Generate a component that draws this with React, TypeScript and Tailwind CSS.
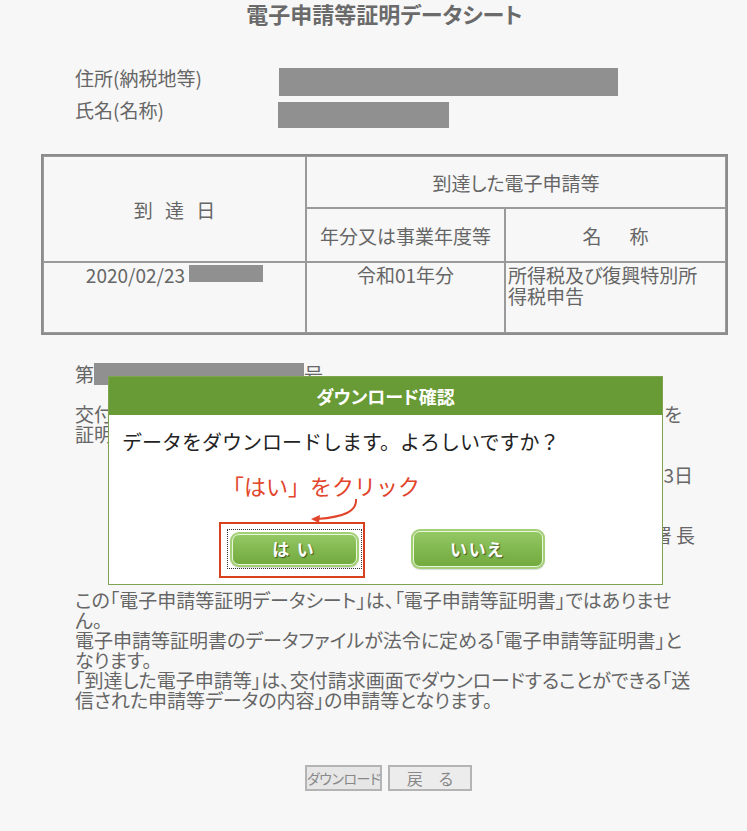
import React from "react";

const jp = "font-['Noto_Sans_CJK_JP','Noto_Sans',sans-serif] [font-feature-settings:'palt']";

const GreenButton = ({ label, w, h }: { label: string; w: string; h: string }) => (
  <div className={`${w} ${h} rounded-[9px] bg-[#a3d077] p-[2px] shadow-[0_1px_1px_rgba(0,0,0,0.15)]`}>
    <div className="flex h-full w-full items-center justify-center rounded-[7px] border border-[#e9f6dc] bg-gradient-to-b from-[#94c865] via-[#82b84f] to-[#74ab40] text-[17px] font-bold tracking-[2px] text-white [text-shadow:1px_1px_1px_rgba(40,60,20,0.8)]">
      {label}
    </div>
  </div>
);

const ConfirmDialog = () => (
  <div className="absolute left-[108px] top-[376px] w-[555px] border border-[#7ea452] bg-white">
    <div className="flex h-[38px] items-center justify-center bg-[#689a35] text-[18px] font-bold text-white">
      ダウンロード確認
    </div>
    <div className="px-[13px] pt-[16px] pb-[15px]">
      <p className="text-[20px] leading-[22px] text-[#222] [font-feature-settings:normal]">
        データをダウンロードします。よろしいですか？
      </p>
      <div className="mt-[76px] flex justify-center gap-[49px]">
        <div className="flex h-[40px] w-[135px] items-center justify-center border border-dotted border-[#333] p-[2px]">
          <GreenButton label="は い" w="w-[129px]" h="h-[35px]" />
        </div>
        <GreenButton label="いいえ" w="w-[134px]" h="h-[40px]" />
      </div>
    </div>

    {/* annotation drawn over the screenshot */}
    <div className="absolute left-[113px] top-[96px] text-[22px] leading-[24px] text-[#e2452b] [font-feature-settings:normal]">
      「はい」をクリック
    </div>
    <svg className="absolute left-[190px] top-[118px]" width="70" height="32" viewBox="0 0 70 32">
      <path d="M57 4 C58 16 46 22 18 24" fill="none" stroke="#e2452b" strokeWidth="2" />
      <path d="M12 24 L21 20 L20 28 Z" fill="#e2452b" />
    </svg>
    <div className="absolute left-[110px] top-[145px] h-[56px] w-[146px] border-2 border-[#d9401e]" />
  </div>
);

const cell = "border border-[#9a9a9a]";

export default function App() {
  return (
    <div className={`relative min-h-[831px] w-full bg-[#f7f7f7] text-[#666] ${jp}`}>
      <div className="ml-[41px] w-[687px]">
        <h1 className="text-center text-[22px] font-bold leading-[26px] text-[#6a6a6a]">
          電子申請等証明データシート
        </h1>

        <div className="mt-[42px] pl-[34px] text-[19px] leading-[20px]">
          <div className="flex h-[32px] items-start">
            <span className="w-[204px]">住所(納税地等)</span>
            <div className="h-[28px] w-[339px] bg-[#909090]" />
          </div>
          <div className="flex items-start">
            <span className="w-[203px]">氏名(名称)</span>
            <div className="mt-[2px] h-[26px] w-[171px] bg-[#909090]" />
          </div>
        </div>

        <table className="mt-[26px] w-[687px] border-separate border-spacing-0 border-2 border-[#8c8c8c] text-[19px] leading-[21px]">
          <tbody>
            <tr className="h-[52px]">
              <td rowSpan={2} className={`${cell} w-[263px] text-center [word-spacing:8px]`}>到 達 日</td>
              <td colSpan={2} className={`${cell} text-center`}>到達した電子申請等</td>
            </tr>
            <tr className="h-[54px]">
              <td className={`${cell} w-[199px] text-center`}>年分又は事業年度等</td>
              <td className={`${cell} text-center`}>
                <span>名</span>
                <span className="ml-[28px]">称</span>
              </td>
            </tr>
            <tr className="h-[71px]">
              <td className={`${cell} pt-[1px] align-top`}>
                <div className="flex items-start justify-center gap-[4px]">
                  <span>2020/02/23</span>
                  <span className="mt-[1px] inline-block h-[17px] w-[74px] bg-[#909090]" />
                </div>
              </td>
              <td className={`${cell} pt-[1px] text-center align-top`}>令和01年分</td>
              <td className={`${cell} pt-[1px] pl-[2px] align-top`}>
                所得税及び復興特別所
                <br />
                得税申告
              </td>
            </tr>
          </tbody>
        </table>

        <div className="mt-[28px] flex items-start pl-[34px] text-[19px] leading-[22px]">
          <span>第</span>
          <div className="h-[22px] w-[210px] bg-[#909090]" />
          <span>号</span>
        </div>

        <p className="mt-[19px] whitespace-nowrap pl-[34px] text-[19px] leading-[20px] [font-feature-settings:normal]">
          交付請求のあった電子申請等は、上記のとおり国税庁に到達したことを
          <br />
          証明します。
        </p>

        <p className="mt-[21px] pr-[35px] text-right text-[19px] leading-[20px]">令和02年02月23日</p>
        <p className="mt-[40px] pr-[33px] text-right text-[19px] leading-[20px]">税務署 長</p>

        <div className="mt-[45px] whitespace-nowrap pl-[34px] text-[19px] leading-[20px]">
          この「電子申請等証明データシート」は、「電子申請等証明書」ではありませ
          <br />
          ん。
          <br />
          電子申請等証明書のデータファイルが法令に定める「電子申請等証明書」と
          <br />
          なります。
          <br />
          「到達した電子申請等」は、交付請求画面でダウンロードすることができる「送
          <br />
          信された申請等データの内容」の申請等となります。
        </div>

        <div className="mt-[55px] flex justify-center gap-[6px] pl-[8px] text-[16px] leading-[20px]">
          <button className="h-[26px] w-[77px] whitespace-nowrap border-2 border-[#b4b4b4] bg-[#e6e6e6] px-0 text-[14px] tracking-[-0.5px] text-[#888]">
            ダウンロード
          </button>
          <button className="h-[26px] w-[84px] border-2 border-[#b4b4b4] bg-[#ececec] text-[#888]">
            戻　る
          </button>
        </div>
      </div>

      <ConfirmDialog />
    </div>
  );
}
